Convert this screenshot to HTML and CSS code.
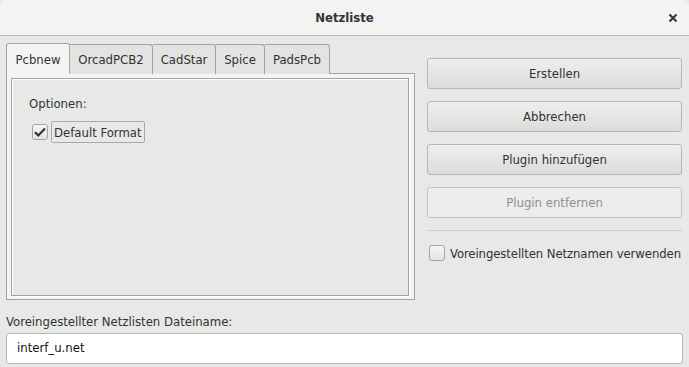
FILE: index.html
```html
<!DOCTYPE html>
<html>
<head>
  <meta charset="utf-8">
  <title>Netzliste</title>
  <link rel="stylesheet" href="styles.css">
</head>
<body>
  <div class="titlebar">
    <span class="title">Netzliste</span>
    <svg class="close" width="10" height="10" viewBox="0 0 10 10"><path d="M1.5 1.5 L8.5 8.5 M8.5 1.5 L1.5 8.5" stroke="#2e3436" stroke-width="2"/></svg>
  </div>

  <div class="dialog">
    <div class="main">
      <div class="notebook">
        <div class="tabs">
          <span class="tab active">Pcbnew</span>
          <span class="tab">OrcadPCB2</span>
          <span class="tab">CadStar</span>
          <span class="tab">Spice</span>
          <span class="tab">PadsPcb</span>
        </div>
        <div class="pane">
          <div class="frame">
            <div class="caption">Optionen:</div>
            <label class="check">
              <span class="box checked">
                <svg width="12" height="10" viewBox="0 0 12 10"><path d="M1 5.2 L4.3 8.4 L11 1.4" fill="none" stroke="#2e3436" stroke-width="2.2"/></svg>
              </span>
              <span class="focus">Default Format</span>
            </label>
          </div>
        </div>
      </div>

      <div class="actions">
        <span class="btn">Erstellen</span>
        <span class="btn">Abbrechen</span>
        <span class="btn">Plugin hinzufügen</span>
        <span class="btn disabled">Plugin entfernen</span>
        <div class="sep"></div>
        <label class="check side">
          <span class="box"></span>
          <span class="side-text">Voreingestellten Netznamen verwenden</span>
        </label>
      </div>
    </div>

    <div class="field">
      <div class="field-label">Voreingestellter Netzlisten Dateiname:</div>
      <div class="entry"><span class="value">interf_u.net</span></div>
    </div>
  </div>
</body>
</html>
```

FILE: styles.css
```css
* {
  box-sizing: border-box;
}

html, body {
  margin: 0;
  height: 100%;
}

body {
  background: #e8e8e7;
  color: #2e3436;
  font-family: "DejaVu Sans Condensed", "DejaVu Sans", sans-serif;
  font-size: 13px;
  white-space: nowrap;
  overflow: hidden;
}

.titlebar {
  height: 36px;
  background: #f3f3f2;
  border-bottom: 1px solid #b9b9b6;
  border-radius: 6px 6px 0 0;
  display: flex;
  align-items: center;
  justify-content: center;
  position: relative;
}

.title {
  font-weight: bold;
  font-size: 13px;
}

.close {
  position: absolute;
  right: 11px;
  top: 13px;
}

.dialog {
  padding: 7px 6px 0 6px;
}

.main {
  display: flex;
  gap: 12px;
}

.notebook {
  width: 409px;
}

.tabs {
  display: flex;
  height: 30px;
  position: relative;
  z-index: 1;
}

.tab {
  display: flex;
  align-items: center;
  justify-content: center;
  padding: 0 6px;
  height: 30px;
  margin-top: 1px;
  border: 1px solid #a4a4a2;
  border-left: none;
  border-bottom: none;
  border-radius: 0 3px 0 0;
  background: #e3e3e1;
  color: #2e3436;
}

.tab.active {
  margin-top: 0;
  height: 31px;
  border-left: 1px solid #a4a4a2;
  border-radius: 3px 3px 0 0;
  background: #f4f4f3;
  width: 64px;
}

.tabs .tab:nth-child(2) { width: 83px; }
.tabs .tab:nth-child(3) { width: 63px; }
.tabs .tab:nth-child(4) { width: 49px; }
.tabs .tab:nth-child(5) { width: 65px; }

.pane {
  height: 227px;
  border: 1px solid #a4a4a2;
  background: #f4f4f3;
  padding: 4px 5px 3px 4px;
}

.frame {
  height: 100%;
  border: 1px solid #a2a2a0;
  box-shadow: inset 1px 1px 0 #ffffff, 1px 1px 0 #ffffff;
  background: #e8e8e7;
  padding: 17px 0 0 17px;
}

.caption {
  margin-bottom: 10px;
}

.check {
  display: flex;
  align-items: center;
  gap: 3px;
}

.box {
  width: 16px;
  height: 16px;
  flex: none;
  border: 1px solid #a4a4a2;
  border-radius: 3px;
  background: linear-gradient(#f5f5f4, #e4e4e2);
  display: flex;
  align-items: center;
  justify-content: center;
}

.check .box.checked {
  margin-left: 3px;
}

.focus {
  border: 1px solid #a9a9a7;
  border-radius: 2px;
  padding: 1px 2px;
  height: 22px;
  display: flex;
  align-items: center;
}

.actions {
  width: 255px;
  padding-top: 15px;
  display: flex;
  flex-direction: column;
  gap: 12px;
}

.btn {
  height: 31px;
  display: flex;
  align-items: center;
  justify-content: center;
  border: 1px solid #b6b6b3;
  border-radius: 3px;
  background: linear-gradient(#eeeeec, #dcdcda);
}

.btn.disabled {
  background: #ececeb;
  color: #8e9192;
  border-color: #c5c5c2;
}

.sep {
  height: 1px;
  background: #cdcdca;
  margin: 0 0 2px 0;
}

.check.side {
  gap: 5px;
  padding-left: 2px;
}

.side-text {
  letter-spacing: -0.1px;
}

.field {
  margin-top: 14px;
}

.field-label {
  margin-bottom: 4px;
}

.entry {
  width: 677px;
  height: 31px;
  border: 1px solid #b6b6b3;
  border-radius: 3px;
  background: #ffffff;
  display: flex;
  align-items: center;
  padding-left: 10px;
  color: #101212;
}

.value {
  line-height: 20px;
  padding-bottom: 2px;
}
```
